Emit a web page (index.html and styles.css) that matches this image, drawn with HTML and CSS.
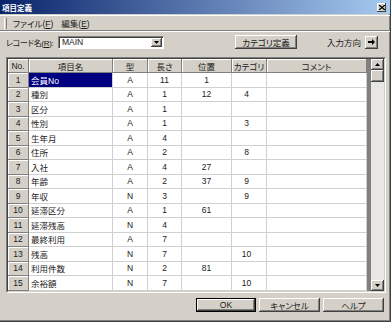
FILE: index.html
```html
<!DOCTYPE html>
<html lang="ja">
<head>
    <meta charset="UTF-8">
    <title>項目定義</title>
    <link rel="stylesheet" href="styles.css">
</head>
<body>
<div class="window">
    <div class="titlebar">
        <span class="title">項目定義</span>
        <span class="close"><svg width="6" height="5" viewBox="0 0 6 5"><path d="M0 0L6 5M6 0L0 5" stroke="#000" stroke-width="1.3"/></svg></span>
    </div>
    <div class="menubar">
        <span class="grip"></span>
        <span class="menu">ファイル(<u>F</u>)</span>
        <span class="menu">編集(<u>E</u>)</span>
    </div>
    <div class="toolbar">
        <span class="rec-label">レコード名(<u>R</u>):</span>
        <div class="combo">
            <span class="combo-text">MAIN</span>
            <span class="combo-btn"><svg width="5" height="3" viewBox="0 0 5 3"><path d="M0 0H5L2.5 3Z" fill="#000"/></svg></span>
        </div>
        <button class="btn cat-btn">カテゴリ定義</button>
        <span class="dir-label">入力方向</span>
        <button class="btn arrow-btn"><svg width="7" height="6" viewBox="0 0 7 6"><path d="M0 2H4V0L7 3L4 6V4H0Z" fill="#000"/></svg></button>
    </div>
    <div class="grid-frame">
        <div class="grid-inner">
            <div class="sheet">
                <div class="hd">No.</div>
                <div class="hd">項目名</div>
                <div class="hd">型</div>
                <div class="hd">長さ</div>
                <div class="hd">位置</div>
                <div class="hd">カテゴリ</div>
                <div class="hd">コメント</div>

                <div class="rh">1</div><div class="c name sel">会員No</div><div class="c">A</div><div class="c">11</div><div class="c">1</div><div class="c cat"></div><div class="c"></div>
                <div class="rh">2</div><div class="c name">種別</div><div class="c">A</div><div class="c">1</div><div class="c">12</div><div class="c cat">4</div><div class="c"></div>
                <div class="rh">3</div><div class="c name">区分</div><div class="c">A</div><div class="c">1</div><div class="c"></div><div class="c cat"></div><div class="c"></div>
                <div class="rh">4</div><div class="c name">性別</div><div class="c">A</div><div class="c">1</div><div class="c"></div><div class="c cat">3</div><div class="c"></div>
                <div class="rh">5</div><div class="c name">生年月</div><div class="c">A</div><div class="c">4</div><div class="c"></div><div class="c cat"></div><div class="c"></div>
                <div class="rh">6</div><div class="c name">住所</div><div class="c">A</div><div class="c">2</div><div class="c"></div><div class="c cat">8</div><div class="c"></div>
                <div class="rh">7</div><div class="c name">入社</div><div class="c">A</div><div class="c">4</div><div class="c">27</div><div class="c cat"></div><div class="c"></div>
                <div class="rh">8</div><div class="c name">年齢</div><div class="c">A</div><div class="c">2</div><div class="c">37</div><div class="c cat">9</div><div class="c"></div>
                <div class="rh">9</div><div class="c name">年収</div><div class="c">N</div><div class="c">3</div><div class="c"></div><div class="c cat">9</div><div class="c"></div>
                <div class="rh">10</div><div class="c name">延滞区分</div><div class="c">A</div><div class="c">1</div><div class="c">61</div><div class="c cat"></div><div class="c"></div>
                <div class="rh">11</div><div class="c name">延滞残高</div><div class="c">N</div><div class="c">4</div><div class="c"></div><div class="c cat"></div><div class="c"></div>
                <div class="rh">12</div><div class="c name">最終利用</div><div class="c">A</div><div class="c">7</div><div class="c"></div><div class="c cat"></div><div class="c"></div>
                <div class="rh">13</div><div class="c name">残高</div><div class="c">N</div><div class="c">7</div><div class="c"></div><div class="c cat">10</div><div class="c"></div>
                <div class="rh">14</div><div class="c name">利用件数</div><div class="c">N</div><div class="c">2</div><div class="c">81</div><div class="c cat"></div><div class="c"></div>
                <div class="rh">15</div><div class="c name">余裕額</div><div class="c">N</div><div class="c">7</div><div class="c"></div><div class="c cat">10</div><div class="c"></div>
                <div class="rh"></div><div class="c name"></div><div class="c"></div><div class="c"></div><div class="c"></div><div class="c cat"></div><div class="c"></div>
            </div>
            <div class="vscroll">
                <span class="sb-btn"><svg width="5" height="3" viewBox="0 0 5 3"><path d="M0 3H5L2.5 0Z" fill="#000"/></svg></span>
                <span class="sb-thumb"></span>
                <span class="sb-track"></span>
                <span class="sb-btn"><svg width="5" height="3" viewBox="0 0 5 3"><path d="M0 0H5L2.5 3Z" fill="#000"/></svg></span>
            </div>
        </div>
    </div>
    <div class="footer">
        <button class="btn ok">OK</button>
        <button class="btn">キャンセル</button>
        <button class="btn">ヘルプ</button>
    </div>
</div>
</body>
</html>
```

FILE: styles.css
```css
body {
    margin: 0;
    background: #d4d0c8;
}

.window {
    width: 391px;
    height: 322px;
    box-sizing: border-box;
    background: #d4d0c8;
    border-right: 1px solid #404040;
    border-bottom: 1px solid #404040;
    box-shadow: inset -1px -1px #808080;
    font-family: "Liberation Sans", "Noto Sans CJK JP", sans-serif;
    font-size: 8.5px;
    font-feature-settings: "palt";
    color: #1a1a1a;
    display: flex;
    flex-direction: column;
}

.titlebar {
    height: 14px;
    display: flex;
    align-items: center;
    padding: 0 4px 0 2px;
    background: linear-gradient(to right, #0a246a, #a6caf0);
}

.title {
    color: #fff;
    font-weight: bold;
    font-size: 7.5px;
}

.close {
    margin-left: auto;
    width: 9px;
    height: 9px;
    background: #d4d0c8;
    box-shadow: inset -1px -1px #404040, inset 1px 1px #fff;
    display: flex;
    align-items: center;
    justify-content: center;
}

.menubar {
    margin-top: 1px;
    height: 14px;
    border-top: 1px solid #fff;
    border-bottom: 1px solid #808080;
    box-shadow: 0 1px #fff;
    display: flex;
    align-items: center;
    padding-left: 4px;
}

.grip {
    width: 1px;
    height: 11px;
    border-left: 1px solid #fff;
    border-right: 1px solid #808080;
    margin-right: 4px;
}

.menu {
    padding: 0 2px;
    margin-right: 4px;
}

.toolbar {
    margin-top: 4px;
    height: 14px;
    display: flex;
    align-items: center;
    padding: 0 12px 0 6px;
}

.rec-label {
    width: 52px;
    flex-shrink: 0;
    white-space: nowrap;
    font-size: 8px;
    letter-spacing: -0.3px;
}

.combo {
    width: 106px;
    height: 13px;
    flex-shrink: 0;
    box-sizing: border-box;
    background: #fff;
    border: 1px solid;
    border-color: #808080 #fff #fff #808080;
    box-shadow: inset 1px 1px #404040;
    display: flex;
    align-items: center;
    padding: 0 1px 0 3px;
}

.combo-text {
    flex: 1;
}

.combo-btn {
    width: 11px;
    height: 9px;
    background: #d4d0c8;
    box-shadow: inset -1px -1px #404040, inset 1px 1px #fff, inset -2px -2px #808080;
    display: flex;
    align-items: center;
    justify-content: center;
}

.btn {
    margin: 0;
    padding: 0;
    border: none;
    background: #d4d0c8;
    box-shadow: inset -1px -1px #404040, inset 1px 1px #fff, inset -2px -2px #808080;
    font: inherit;
    font-feature-settings: "palt";
    color: #1a1a1a;
    height: 14px;
    display: flex;
    align-items: center;
    justify-content: center;
    white-space: nowrap;
}

.cat-btn {
    margin-left: auto;
    width: 62px;
}

.dir-label {
    margin-left: 30px;
    white-space: nowrap;
}

.arrow-btn {
    margin-left: 4px;
    width: 13px;
    height: 13px;
}

.grid-frame {
    margin: 8px 0 0 6px;
    width: 380px;
    height: 236px;
    box-sizing: border-box;
    border: 1px solid;
    border-color: #808080 #fff #fff #808080;
}

.grid-inner {
    height: 100%;
    box-sizing: border-box;
    border: 1px solid;
    border-color: #404040 #d4d0c8 #d4d0c8 #404040;
    display: flex;
}

.sheet {
    flex: 1;
    overflow: hidden;
    background: #808080;
    display: grid;
    grid-template-columns: 21px 84px 35px 34px 50px 35px 100px;
    grid-template-rows: 14px;
    grid-auto-rows: 14.5px;
    align-content: start;
}

.hd,
.rh {
    background: #d4d0c8;
    border-right: 1px solid #808080;
    border-bottom: 1px solid #808080;
    box-shadow: inset 1px 1px #fff;
    display: flex;
    align-items: center;
    justify-content: center;
    box-sizing: border-box;
}

.c {
    background: #fff;
    border-right: 1px solid #d0d0d0;
    border-bottom: 1px solid #d0d0d0;
    box-sizing: border-box;
    display: flex;
    align-items: center;
    justify-content: center;
}

.c.name {
    justify-content: flex-start;
    padding-left: 2px;
}

.c.cat {
    padding-right: 5px;
}

.c.sel {
    background: #000080;
    color: #fff;
}

.vscroll {
    width: 13px;
    display: flex;
    flex-direction: column;
    background: #e9e7e3;
}

.sb-btn,
.sb-thumb {
    height: 11px;
    background: #d4d0c8;
    box-shadow: inset -1px -1px #404040, inset 1px 1px #fff, inset -2px -2px #808080;
    display: flex;
    align-items: center;
    justify-content: center;
}

.sb-thumb {
    height: 12px;
}

.sb-track {
    flex: 1;
}

.footer {
    margin-top: 5px;
    display: flex;
    justify-content: flex-end;
    gap: 3px;
    padding-right: 6px;
}

.footer .btn {
    width: 61px;
}

.footer .ok {
    width: 60px;
    border: 1px solid #000;
}
```
